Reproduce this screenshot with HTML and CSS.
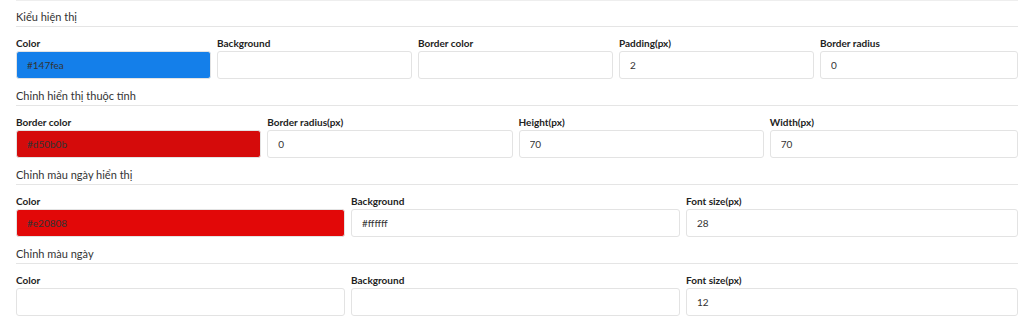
FILE: index.html
```html
<!DOCTYPE html>
<html lang="vi">
<head>
<meta charset="utf-8">
<title>Cài đặt hiển thị</title>
<link rel="stylesheet" href="styles.css">
</head>
<body>
<div class="page">
  <div class="top-rule"></div>

  <section class="group">
    <h3 class="group-title">Kiểu hiện thị</h3>
    <div class="fields cols-5">
      <label class="field"><span class="field-label">Color</span><input class="field-input" style="background-color:#147fea" value="#147fea"></label>
      <label class="field"><span class="field-label">Background</span><input class="field-input" value=""></label>
      <label class="field"><span class="field-label">Border color</span><input class="field-input" value=""></label>
      <label class="field"><span class="field-label">Padding(px)</span><input class="field-input" value="2"></label>
      <label class="field"><span class="field-label">Border radius</span><input class="field-input" value="0"></label>
    </div>
  </section>

  <section class="group">
    <h3 class="group-title">Chỉnh hiển thị thuộc tính</h3>
    <div class="fields cols-4">
      <label class="field"><span class="field-label">Border color</span><input class="field-input" style="background-color:#d50b0b" value="#d50b0b"></label>
      <label class="field"><span class="field-label">Border radius(px)</span><input class="field-input" value="0"></label>
      <label class="field"><span class="field-label">Height(px)</span><input class="field-input" value="70"></label>
      <label class="field"><span class="field-label">Width(px)</span><input class="field-input" value="70"></label>
    </div>
  </section>

  <section class="group">
    <h3 class="group-title">Chỉnh màu ngày hiển thị</h3>
    <div class="fields cols-3">
      <label class="field"><span class="field-label">Color</span><input class="field-input" style="background-color:#e20808" value="#e20808"></label>
      <label class="field"><span class="field-label">Background</span><input class="field-input" style="background-color:#ffffff" value="#ffffff"></label>
      <label class="field"><span class="field-label">Font size(px)</span><input class="field-input" value="28"></label>
    </div>
  </section>

  <section class="group">
    <h3 class="group-title">Chỉnh màu ngày</h3>
    <div class="fields cols-3">
      <label class="field"><span class="field-label">Color</span><input class="field-input" value=""></label>
      <label class="field"><span class="field-label">Background</span><input class="field-input" value=""></label>
      <label class="field"><span class="field-label">Font size(px)</span><input class="field-input" value="12"></label>
    </div>
  </section>
</div>
</body>
</html>
```

FILE: styles.css
```css
html, body {
  margin: 0;
  padding: 0;
  background: #ffffff;
}

body {
  font-family: Lato, "Open Sans", "Liberation Sans", sans-serif;
  color: #333333;
}

.page {
  padding: 0 6px 0 16px;
}

.top-rule {
  border-top: 1px solid #eeeeee;
}

.group-title {
  margin: 8px 0 0 0;
  font-size: 11px;
  font-weight: 400;
  line-height: 18px;
  color: #333333;
  border-bottom: 1px solid #e5e5e5;
}

.group:first-of-type .group-title {
  margin-top: 7px;
}

.fields {
  display: grid;
  gap: 6px;
  margin-top: 10px;
  margin-right: 3px;
}

.cols-5 { grid-template-columns: repeat(5, 1fr); }
.cols-4 { grid-template-columns: repeat(4, 1fr); }
.cols-3 { grid-template-columns: repeat(3, 1fr); }

.field {
  display: flex;
  flex-direction: column;
  min-width: 0;
}

.field:last-child {
  margin-right: -3px;
}

.field-label {
  font-size: 10px;
  font-weight: 700;
  line-height: 12px;
  color: #222222;
  margin-bottom: 2px;
}

.field-input {
  box-sizing: border-box;
  width: 100%;
  height: 28px;
  margin: 0;
  padding: 0 10px;
  font-family: Lato, "Open Sans", "Liberation Sans", sans-serif;
  font-size: 10px;
  color: #333333;
  background-color: #ffffff;
  border: 1px solid #e3e3e3;
  border-radius: 3px;
  outline: none;
}
```
